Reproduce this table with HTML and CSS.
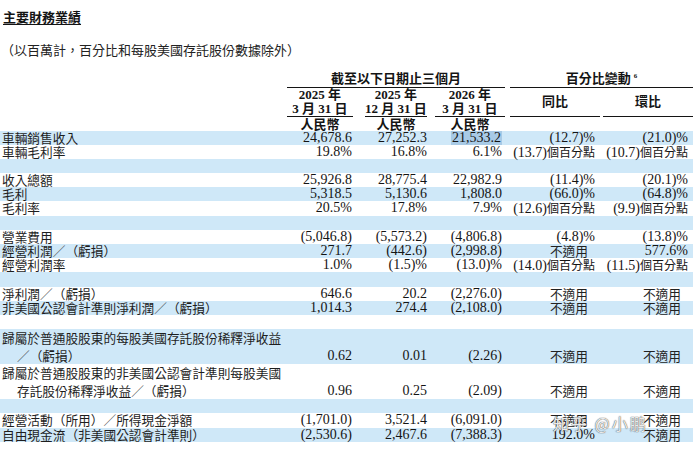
FILE: index.html
```html
<!DOCTYPE html>
<html lang="zh-Hant">
<head>
<meta charset="utf-8">
<title>主要財務業績</title>
<link rel="stylesheet" href="styles.css">
</head>
<body>
<div class="page">
  <h1 class="title">主要財務業績</h1>
  <p class="sub">（以百萬計，百分比和每股美國存託股份數據除外）</p>
  <div class="tbl">
    <div class="row hA">
      <div class="sp3"><div class="hl">截至以下日期止三個月</div></div>
      <div class="sp2"><div class="hl">百分比變動<sup>6</sup></div></div>
    </div>
    <div class="row hB">
      <div></div>
      <div class="c1"><div class="hl">2025 年<br>3 月 31 日</div></div>
      <div class="c2"><div class="hl">2025 年<br>12 月 31 日</div></div>
      <div class="c3"><div class="hl">2026 年<br>3 月 31 日</div></div>
      <div class="c4"><div class="hl mid">同比</div></div>
      <div class="c5"><div class="hl mid">環比</div></div>
    </div>
    <div class="row hC">
      <div></div>
      <div class="c1"><div class="hc">人民幣</div></div>
      <div class="c2"><div class="hc">人民幣</div></div>
      <div class="c3"><div class="hc">人民幣</div></div>
      <div></div><div></div>
    </div>

    <div class="row b"><div class="lb">車輛銷售收入</div><div class="v v1">24,678.6</div><div class="v v2">27,252.3</div><div class="v v3"><span class="sel">21,533.2</span></div><div class="v v4">(12.7)%</div><div class="v v5">(21.0)%</div></div>
    <div class="row"><div class="lb">車輛毛利率</div><div class="v v1">19.8%</div><div class="v v2">16.8%</div><div class="v v3">6.1%</div><div class="v v4">(13.7)<span class="u">個百分點</span></div><div class="v v5">(10.7)<span class="u">個百分點</span></div></div>
    <div class="row b"></div>
    <div class="row"><div class="lb">收入總額</div><div class="v v1">25,926.8</div><div class="v v2">28,775.4</div><div class="v v3">22,982.9</div><div class="v v4">(11.4)%</div><div class="v v5">(20.1)%</div></div>
    <div class="row b"><div class="lb">毛利</div><div class="v v1">5,318.5</div><div class="v v2">5,130.6</div><div class="v v3">1,808.0</div><div class="v v4">(66.0)%</div><div class="v v5">(64.8)%</div></div>
    <div class="row"><div class="lb">毛利率</div><div class="v v1">20.5%</div><div class="v v2">17.8%</div><div class="v v3">7.9%</div><div class="v v4">(12.6)<span class="u">個百分點</span></div><div class="v v5">(9.9)<span class="u">個百分點</span></div></div>
    <div class="row b"></div>
    <div class="row"><div class="lb">營業費用</div><div class="v v1">(5,046.8)</div><div class="v v2">(5,573.2)</div><div class="v v3">(4,806.8)</div><div class="v v4">(4.8)%</div><div class="v v5">(13.8)%</div></div>
    <div class="row b"><div class="lb">經營利潤／（虧損）</div><div class="v v1">271.7</div><div class="v v2">(442.6)</div><div class="v v3">(2,998.8)</div><div class="v v4 na">不適用</div><div class="v v5">577.6%</div></div>
    <div class="row"><div class="lb">經營利潤率</div><div class="v v1">1.0%</div><div class="v v2">(1.5)%</div><div class="v v3">(13.0)%</div><div class="v v4">(14.0)<span class="u">個百分點</span></div><div class="v v5">(11.5)<span class="u">個百分點</span></div></div>
    <div class="row b"></div>
    <div class="row"><div class="lb">淨利潤／（虧損）</div><div class="v v1">646.6</div><div class="v v2">20.2</div><div class="v v3">(2,276.0)</div><div class="v v4 na">不適用</div><div class="v v5 na">不適用</div></div>
    <div class="row b"><div class="lb">非美國公認會計準則淨利潤／（虧損）</div><div class="v v1">1,014.3</div><div class="v v2">274.4</div><div class="v v3">(2,108.0)</div><div class="v v4 na">不適用</div><div class="v v5 na">不適用</div></div>
    <div class="row"></div>
    <div class="row two b"><div class="lb">歸屬於普通股股東的每股美國存託股份稀釋淨收益<span class="ind">／（虧損）</span></div><div class="v v1">0.62</div><div class="v v2">0.01</div><div class="v v3">(2.26)</div><div class="v v4 na">不適用</div><div class="v v5 na">不適用</div></div>
    <div class="row two"><div class="lb">歸屬於普通股股東的非美國公認會計準則每股美國<span class="ind">存託股份稀釋淨收益／（虧損）</span></div><div class="v v1">0.96</div><div class="v v2">0.25</div><div class="v v3">(2.09)</div><div class="v v4 na">不適用</div><div class="v v5 na">不適用</div></div>
    <div class="row b"></div>
    <div class="row"><div class="lb">經營活動（所用）／所得現金淨額</div><div class="v v1">(1,701.0)</div><div class="v v2">3,521.4</div><div class="v v3">(6,091.0)</div><div class="v v4 na">不適用</div><div class="v v5 na">不適用</div></div>
    <div class="row b"><div class="lb">自由現金流（非美國公認會計準則）</div><div class="v v1">(2,530.6)</div><div class="v v2">2,467.6</div><div class="v v3">(7,388.3)</div><div class="v v4">192.0%</div><div class="v v5 na">不適用</div></div>
  </div>
  <div class="wm">知乎 @小鹏</div>
</div>
</body>
</html>
```

FILE: styles.css
```css
body {
  margin: 0;
  background: #fff;
  color: #141414;
  font-family: "Liberation Serif", "Noto Sans CJK TC", serif;
}

.page {
  position: relative;
  width: 700px;
  height: 456px;
  overflow: hidden;
}

.title {
  margin: 0;
  padding: 9px 0 0 3px;
  font-family: "Noto Sans CJK TC", sans-serif;
  font-size: 13px;
  line-height: 16px;
  font-weight: bold;
  text-decoration: underline;
  text-underline-offset: 2px;
}

.sub {
  margin: 17px 0 0 0;
  padding-left: 1px;
  font-family: "Noto Sans CJK TC", sans-serif;
  font-size: 13px;
  line-height: 16px;
  color: #222;
}

.tbl {
  margin-top: 11px;
  width: 693px;
}

.row {
  display: grid;
  grid-template-columns: 287px 66px 77px 75px 95px 93px;
  height: 14.2px;
}

.row.b {
  background: #cfe8f8;
}

/* header rows */
.hA {
  height: 19px;
  font-weight: bold;
  font-size: 13px;
}
.hA .sp3 { grid-column: 2 / 5; }
.hA .sp2 { grid-column: 5 / 7; padding-left: 5px; }
.hA .hl {
  height: 16px;
  padding-top: 2px;
  line-height: 16px;
  text-align: center;
  border-bottom: 1px solid #141414;
}
.hA sup {
  font-size: 7px;
  vertical-align: top;
  line-height: 10px;
  margin-left: 3px;
}

.hB {
  height: 29px;
  font-weight: bold;
  font-size: 13px;
}
.hB .hl {
  height: 28px;
  line-height: 14px;
  text-align: center;
  border-bottom: 1px solid #141414;
  white-space: nowrap;
}
.hB .mid {
  display: flex;
  align-items: center;
  justify-content: center;
}
.c2 .hl, .c2 .hc { margin-left: 12px; margin-right: 3px; }
.c3 .hl, .c3 .hc { margin-left: 5px; }
.c4 .hl { margin-left: 5px; }
.c5 .hl { margin-left: 3px; }

.hC {
  height: 13.5px;
  font-weight: bold;
  font-size: 13px;
}
.hc {
  text-align: center;
  line-height: 14px;
  margin-top: 1px;
}

/* data rows */
.lb {
  padding-left: 2px;
  font-family: "Noto Sans CJK TC", sans-serif;
  font-size: 12.7px;
  line-height: 14.2px;
  color: #1e1e1e;
  white-space: nowrap;
}

.v {
  text-align: right;
  font-size: 14px;
  line-height: 14.2px;
  white-space: nowrap;
}
.v1 { padding-right: 1px; }
.v2 { padding-right: 3px; }
.v3 { padding-right: 3px; }
.v4 { padding-right: 5px; }
.v5 { padding-right: 5px; }
.v.na {
  padding-right: 12px;
  font-family: "Noto Sans CJK TC", sans-serif;
  font-size: 12.7px;
  color: #222;
}

.u {
  font-family: "Noto Sans CJK TC", sans-serif;
  font-size: 12px;
}

.sel {
  display: inline-block;
  background: #a8cae6;
  padding: 0 1px;
  line-height: 14.2px;
}

.row.two {
  height: 35px;
}
.row.two .lb {
  line-height: 17.5px;
}
.row.two .v {
  align-self: end;
  line-height: 17.5px;
}
.ind {
  display: block;
  padding-left: 15px;
}

/* watermark overlay */
.wm {
  position: absolute;
  left: 553px;
  top: 413px;
  font-family: "Noto Sans CJK SC", sans-serif;
  font-size: 16px;
  line-height: 20px;
  color: rgba(255, 255, 255, 0.9);
  text-shadow: 0 0 1px rgba(80, 80, 80, 0.9), 0 0 1px rgba(80, 80, 80, 0.9);
  letter-spacing: 2px;
  white-space: nowrap;
}
```
